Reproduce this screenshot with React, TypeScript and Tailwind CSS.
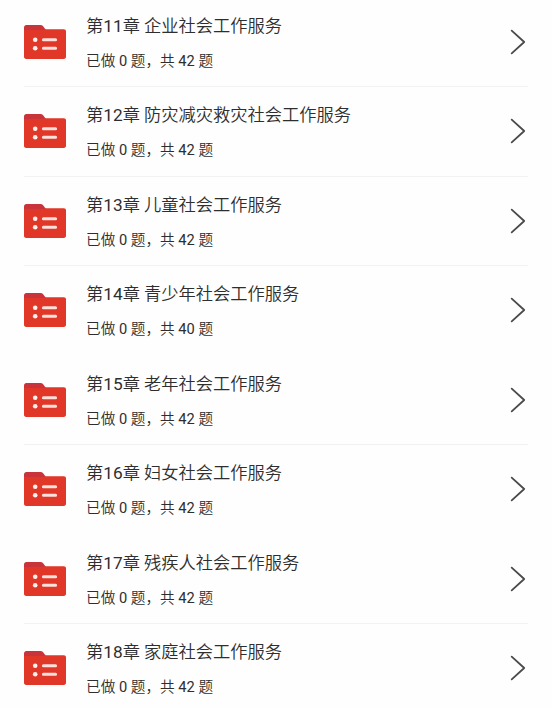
type Chapter = {
  no: number;
  title: string;
  done: number;
  total: number;
  divider: boolean;
};

const chapters: Chapter[] = [
  { no: 11, title: '企业社会工作服务', done: 0, total: 42, divider: true },
  { no: 12, title: '防灾减灾救灾社会工作服务', done: 0, total: 42, divider: true },
  { no: 13, title: '儿童社会工作服务', done: 0, total: 42, divider: true },
  { no: 14, title: '青少年社会工作服务', done: 0, total: 40, divider: false },
  { no: 15, title: '老年社会工作服务', done: 0, total: 42, divider: true },
  { no: 16, title: '妇女社会工作服务', done: 0, total: 42, divider: false },
  { no: 17, title: '残疾人社会工作服务', done: 0, total: 42, divider: true },
  { no: 18, title: '家庭社会工作服务', done: 0, total: 42, divider: false },
];

function FolderIcon() {
  return (
    <svg className="h-[34px] w-[42px] flex-shrink-0" viewBox="0 0 42 34" fill="none">
      <path d="M0 8V2.4C0 1 1 0 2.4 0h14.1c1 0 1.8.4 2.4 1.1L22 5v4H0z" fill="#c9333a" />
      <path d="M0 5h19.5c.8 0 1.4-.7 2.2-.7h18.1C41.2 4.3 42 5.2 42 6.5v25.3c0 1.3-.9 2.2-2.2 2.2H2.2C.9 34 0 33.1 0 31.8z" fill="#e03728" />
      <circle cx="11.2" cy="14.8" r="2.3" fill="#ffefeb" />
      <circle cx="11.2" cy="23.2" r="2.3" fill="#ffefeb" />
      <path d="M19.4 14.8h12.2M19.4 23.2h12.2" stroke="#fde0dc" strokeWidth="3" strokeLinecap="round" />
    </svg>
  );
}

function ArrowIcon() {
  return (
    <svg className="mr-0.5 h-[26px] w-4 flex-shrink-0" viewBox="0 0 16 26" fill="none">
      <path d="M1.7 1.6 14.2 13 1.7 24.4" stroke="#4a4a4a" strokeWidth="1.8" strokeLinecap="round" strokeLinejoin="round" />
    </svg>
  );
}

function ChapterRow({ no, title, done, total, divider }: Chapter) {
  return (
    <li
      className={`flex h-[89.43px] items-center border-b ${divider ? 'border-[#f2f2f2]' : 'border-transparent'}`}
    >
      <FolderIcon />
      <div className="ml-5 flex-1 pt-1 whitespace-nowrap">
        <h3 className="text-[17.25px] leading-[34px] text-[#2e2e2e]">
          第<span className="font-normal">{no}</span>章 {title}
        </h3>
        <p className="text-[14.65px] leading-[36px] text-[#2e2e2e]">
          已做<span className="font-normal"> {done} </span>题，共
          <span className="font-normal"> {total} </span>题
        </p>
      </div>
      <ArrowIcon />
    </li>
  );
}

export default function App() {
  return (
    <div className="h-[708px] overflow-hidden bg-[#fefefe] font-[Roboto,'Noto_Sans_CJK_SC',sans-serif] font-[350]">
      <ul className="-mt-[2.2px] pr-6 pl-6">
        {chapters.map((chapter) => (
          <ChapterRow key={chapter.no} {...chapter} />
        ))}
      </ul>
    </div>
  );
}
